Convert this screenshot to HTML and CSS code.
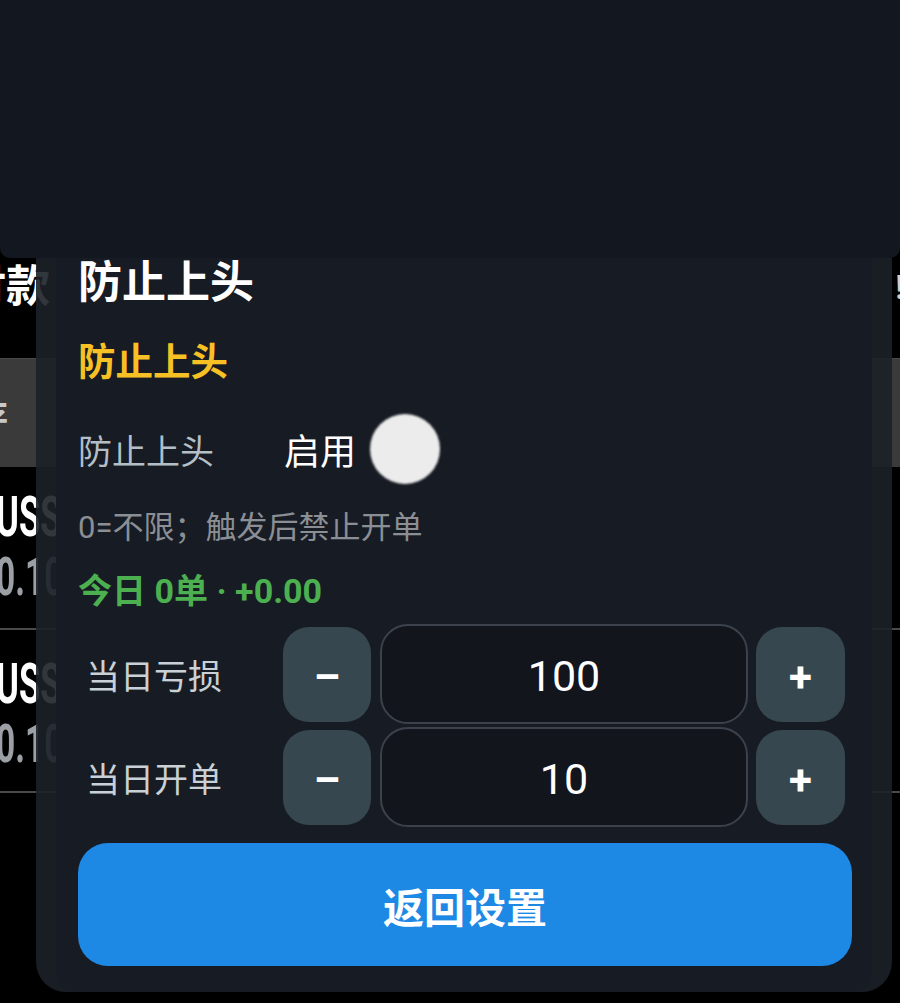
FILE: index.html
```html
<!DOCTYPE html>
<html lang="zh-CN">
<head>
    <meta charset="UTF-8">
    <meta name="viewport" content="width=device-width, initial-scale=1.0">
    <title>防止上头</title>
    <link rel="stylesheet" href="styles.css">
</head>
<body>
    <div class="screen">
        <!-- Top bar -->
        <header class="topbar"></header>

        <!-- Page behind the dialog -->
        <main class="orders">
            <div class="orders-head">
                <span class="head-title">付款</span>
                <span class="head-side">!4</span>
            </div>
            <div class="tabs"><span class="tab-label">存</span></div>
            <div class="order">
                <div class="order-info">
                    <div class="order-symbol">USSPX</div>
                    <div class="order-lots">0.10</div>
                </div>
            </div>
            <div class="order">
                <div class="order-info">
                    <div class="order-symbol">USSPX</div>
                    <div class="order-lots">0.10</div>
                </div>
            </div>
        </main>

        <!-- Dialog -->
        <section class="sheet">
            <div class="sheet-body">
                <h1 class="sheet-title">防止上头</h1>
                <h2 class="section-title">防止上头</h2>

                <div class="switch-row">
                    <span class="switch-label">防止上头</span>
                    <span class="switch-text">启用</span>
                    <span class="switch-thumb"></span>
                </div>

                <p class="hint">0=不限；触发后禁止开单</p>
                <p class="today">今日 0单 · +0.00</p>

                <div class="stepper">
                    <span class="stepper-label">当日亏损</span>
                    <button class="step-btn">–</button>
                    <div class="step-value">100</div>
                    <button class="step-btn">+</button>
                </div>
                <div class="stepper">
                    <span class="stepper-label">当日开单</span>
                    <button class="step-btn">–</button>
                    <div class="step-value">10</div>
                    <button class="step-btn">+</button>
                </div>

                <button class="back-btn">返回设置</button>
            </div>
        </section>
    </div>
</body>
</html>
```

FILE: styles.css
```css
/* General */
* {
    box-sizing: border-box;
}

body {
    margin: 0;
    padding: 0;
    background-color: #000;
    font-family: Roboto, "Noto Sans CJK SC", sans-serif;
    color: #fff;
}

.screen {
    position: relative;
    width: 900px;
    height: 1003px;
    overflow: hidden;
    background-color: #000;
}

/* Top bar */
.topbar {
    position: relative;
    z-index: 2;
    height: 258px;
    background-color: #131720;
    border-radius: 0 0 10px 10px;
}

/* Order list behind the dialog */
.orders {
    display: flex;
    flex-direction: column;
}

.orders-head {
    display: flex;
    justify-content: space-between;
    align-items: center;
    height: 50px;
    margin-top: 4px;
    font-size: 44px;
    font-weight: 700;
    line-height: 50px;
}

.head-title {
    margin-left: -38px;
}

.head-side {
    margin-right: -24px;
    color: #d0d0d0;
    font-size: 34px;
}

.tabs {
    display: flex;
    align-items: center;
    height: 109px;
    margin-top: 46px;
    background-color: #3a3a3a;
    border-top: 1px solid #4a4a4a;
}

.tab-label {
    margin-left: -26px;
    color: #c8c8c8;
    font-size: 34px;
    font-weight: 700;
}

.order {
    display: flex;
    flex-direction: column;
    height: 163px;
    padding-top: 20px;
    border-bottom: 2px solid #4a4a4a;
}

.order + .order {
    padding-top: 24px;
}

/* only the left edge of each row shows past the dialog */
.order-info {
    width: 60px;
    overflow: hidden;
}

.order-symbol,
.order-lots {
    width: 100px;
    margin-left: -4px;
    font-size: 56px;
    font-weight: 700;
    line-height: 60px;
    white-space: nowrap;
    transform: scaleX(0.62);
    transform-origin: left center;
}

.order-lots {
    color: #9aa0a6;
    font-size: 54px;
}

/* Dialog */
.sheet {
    position: absolute;
    z-index: 1;
    top: 258px;
    left: 36px;
    width: 856px;
    height: 734px;
    padding: 0 20px;
    overflow: hidden;
    background-color: rgba(28, 32, 40, 0.9);
    border-radius: 0 0 30px 30px;
}

.sheet-body {
    display: flex;
    flex-direction: column;
    height: 100%;
    padding: 0 20px 26px 22px;
    background-color: #171b23;
    border-radius: 0 0 20px 20px;
}

.sheet-title {
    margin: 0;
    font-size: 44px;
    font-weight: 700;
    line-height: 50px;
    color: #fff;
}

.section-title {
    margin: 31px 0 0;
    font-size: 37.5px;
    font-weight: 700;
    line-height: 46px;
    color: #f7c125;
}

.switch-row {
    display: flex;
    align-items: center;
    height: 70px;
    margin-top: 29px;
}

.switch-label {
    width: 206px;
    font-size: 34px;
    color: #b3bec6;
}

.switch-text {
    font-size: 36px;
    color: #fff;
}

.switch-thumb {
    width: 70px;
    height: 70px;
    margin-left: 14px;
    border-radius: 50%;
    background-color: #ececec;
    filter: blur(1.2px);
}

.hint {
    margin: 24px 0 0;
    font-size: 31px;
    line-height: 40px;
    color: #8b8f95;
}

.today {
    margin: 23px 0 0;
    font-size: 34px;
    font-weight: 700;
    line-height: 40px;
    color: #4caf50;
}

/* Steppers */
.stepper {
    display: flex;
    align-items: center;
    height: 100px;
    margin-top: 13px;
    padding: 0 7px 0 8px;
}

.stepper + .stepper {
    margin-top: 3px;
}

.stepper-label {
    width: 197px;
    font-size: 34px;
    color: #c9d1d6;
}

.step-btn {
    width: 88px;
    height: 95px;
    padding: 6px 0 0;
    border: none;
    border-radius: 26px;
    background-color: #37474f;
    color: #fff;
    font-family: Roboto, sans-serif;
    font-size: 42px;
    font-weight: 700;
}

.step-btn:last-child {
    width: 89px;
    margin-left: 8px;
}

.step-value {
    flex: 1;
    height: 100px;
    margin-left: 9px;
    padding-top: 6px;
    border: 2px solid #3c424b;
    border-radius: 28px;
    background-color: #12151c;
    font-size: 43px;
    line-height: 88px;
    text-align: center;
    color: #fff;
}

/* Bottom button */
.back-btn {
    height: 123px;
    margin-top: 16px;
    border: none;
    border-radius: 30px;
    background-color: #1e88e5;
    color: #fff;
    font-family: "Noto Sans CJK SC", sans-serif;
    font-size: 41px;
    font-weight: 700;
}
```
